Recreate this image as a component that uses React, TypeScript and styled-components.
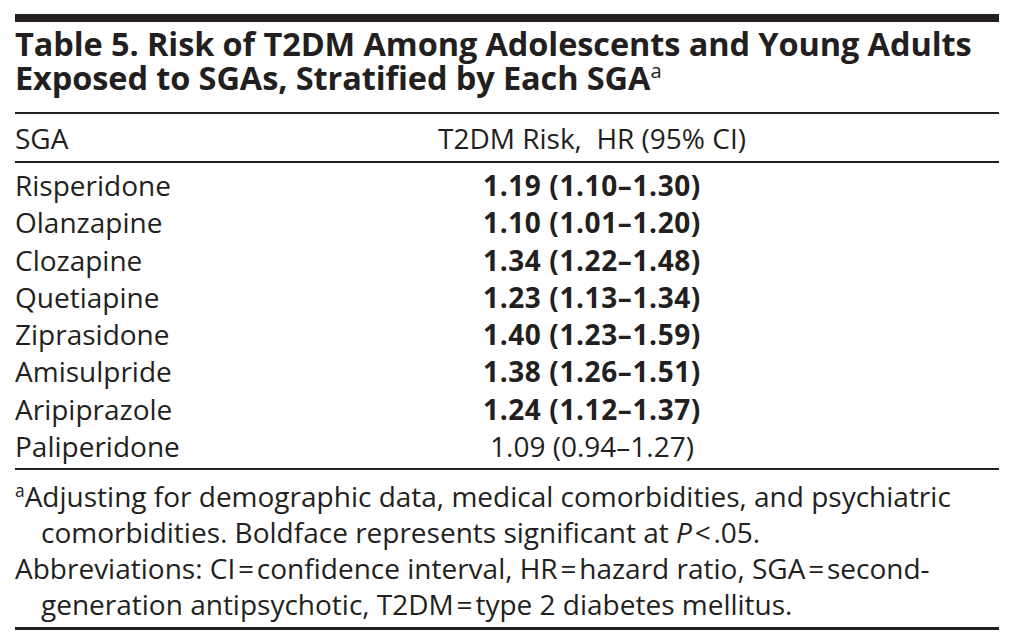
import React from "react";
import styled, { createGlobalStyle } from "styled-components";

const Global = createGlobalStyle`
  html, body { margin: 0; padding: 0; background: #ffffff; }
  body { font-family: "Open Sans", Lato, sans-serif; color: #231f20; }
`;

const Page = styled.div`
  width: 1011px;
  height: 640px;
  padding: 14px 12px 0 15px;
  box-sizing: border-box;
`;

const TopRule = styled.div`
  height: 8px;
  background: #231f20;
`;

const Title = styled.h1`
  margin: 0;
  padding: 5px 0 17px;
  font-size: 32.5px;
  line-height: 34px;
  font-weight: 700;
  letter-spacing: -0.1px;
  border-bottom: 2px solid #231f20;
`;

const Sup = styled.sup`
  font-size: 0.62em;
  font-weight: 400;
  vertical-align: 0.6em;
  line-height: 0;
  letter-spacing: 0;
`;

const Grid = styled.div`
  display: grid;
  grid-template-columns: 170px 1fr;
`;

const HeadCell = styled.div<{ $center?: boolean }>`
  font-size: 28px;
  line-height: 46px;
  padding-top: 1px;
  text-align: ${(p) => (p.$center ? "center" : "left")};
  border-bottom: 2px solid #231f20;
  white-space: pre;
`;

const Body = styled.div`
  padding: 4px 0 3px;
  border-bottom: 2px solid #231f20;
`;

const Row = styled.div`
  display: grid;
  grid-template-columns: 170px 1fr;
  font-size: 28px;
  line-height: 37.3px;
`;

const Name = styled.div``;

const Value = styled.div<{ $bold?: boolean }>`
  text-align: center;
  font-weight: ${(p) => (p.$bold ? 700 : 400)};
  letter-spacing: ${(p) => (p.$bold ? "0.6px" : "0")};
`;

const Notes = styled.div`
  padding: 8px 0 5px;
  border-bottom: 3px solid #231f20;
`;

const Note = styled.p`
  margin: 0;
  font-size: 28px;
  line-height: 36px;
  padding-left: 26px;
  text-indent: -26px;
`;

const Italic = styled.i``;

const rows: { name: string; value: string; bold: boolean }[] = [
  { name: "Risperidone", value: "1.19 (1.10–1.30)", bold: true },
  { name: "Olanzapine", value: "1.10 (1.01–1.20)", bold: true },
  { name: "Clozapine", value: "1.34 (1.22–1.48)", bold: true },
  { name: "Quetiapine", value: "1.23 (1.13–1.34)", bold: true },
  { name: "Ziprasidone", value: "1.40 (1.23–1.59)", bold: true },
  { name: "Amisulpride", value: "1.38 (1.26–1.51)", bold: true },
  { name: "Aripiprazole", value: "1.24 (1.12–1.37)", bold: true },
  { name: "Paliperidone", value: "1.09 (0.94–1.27)", bold: false },
];

export default function App() {
  return (
    <Page>
      <Global />
      <TopRule />
      <Title>
        Table 5. Risk of T2DM Among Adolescents and Young Adults
        <br />
        Exposed to SGAs, Stratified by Each SGA<Sup>a</Sup>
      </Title>
      <Grid>
        <HeadCell>SGA</HeadCell>
        <HeadCell $center>{"T2DM Risk,  HR (95% CI)"}</HeadCell>
      </Grid>
      <Body>
        {rows.map((r) => (
          <Row key={r.name}>
            <Name>{r.name}</Name>
            <Value $bold={r.bold}>{r.value}</Value>
          </Row>
        ))}
      </Body>
      <Notes>
        <Note>
          <Sup>a</Sup>Adjusting for demographic data, medical comorbidities, and psychiatric
          <br />
          comorbidities. Boldface represents significant at <Italic>P</Italic>{"\u200a<\u200a.05."}
        </Note>
        <Note>
          {"Abbreviations: CI\u200a=\u200aconfidence interval, HR\u200a=\u200ahazard ratio, SGA\u200a=\u200asecond-"}
          <br />
          {"generation antipsychotic, T2DM\u200a=\u200atype 2 diabetes mellitus."}
        </Note>
      </Notes>
    </Page>
  );
}
